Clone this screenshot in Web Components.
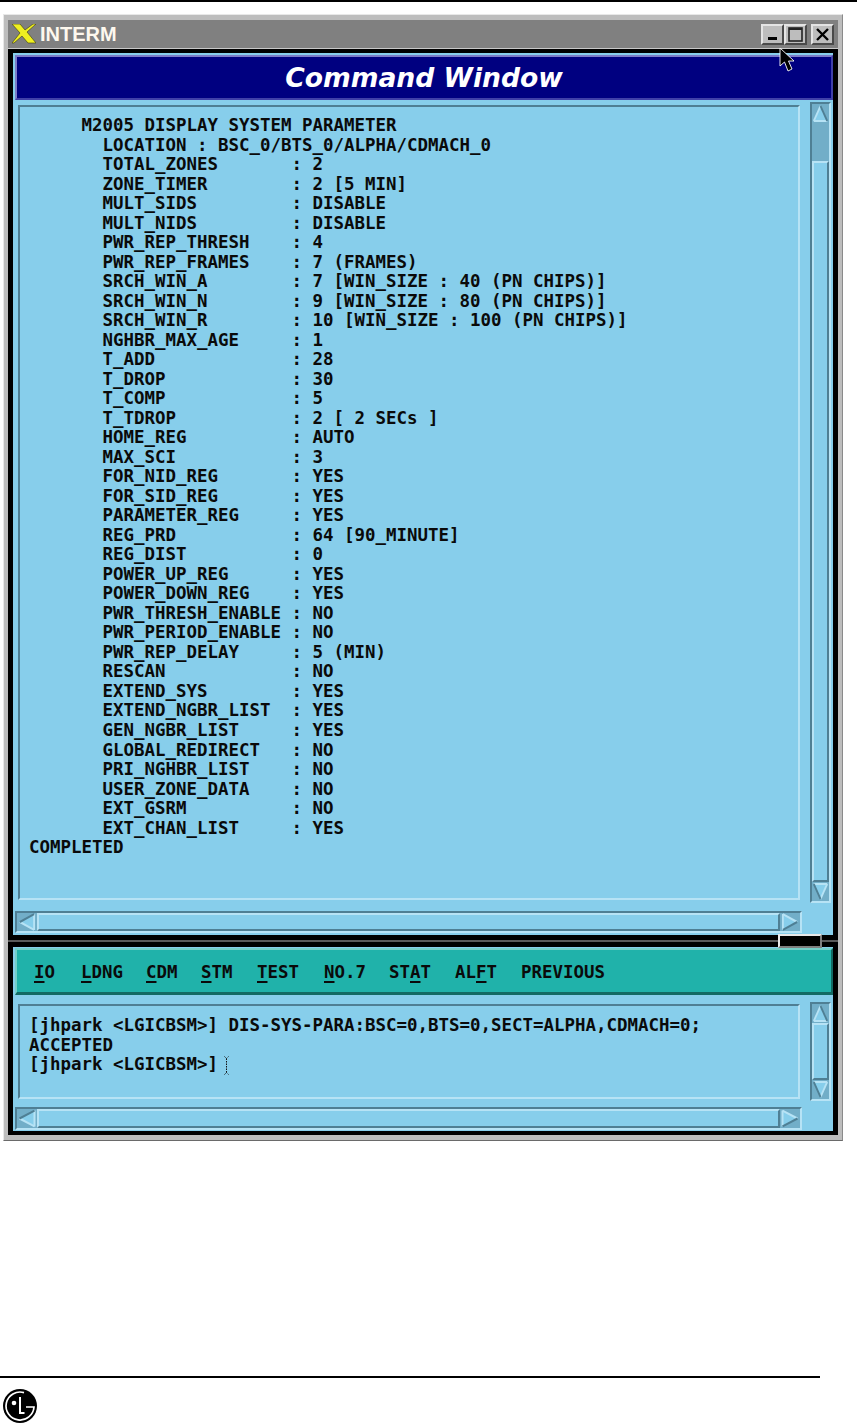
<!DOCTYPE html>
<html>
<head>
<meta charset="utf-8">
<title>Command Window</title>
<style>
  html, body { margin: 0; background: #fff; }
  body { width: 857px; height: 1425px; overflow: hidden; }
</style>
</head>
<body>
<doc-page>
  <term-window title-text="INTERM">
    <span slot="banner">Command Window</span>
    <term-pane slot="output" row-h="801" scroll-gap="8" scroll-h="22" text-inset="3" pad-top="9" thumb-top="38">     M2005 DISPLAY SYSTEM PARAMETER
       LOCATION : BSC_0/BTS_0/ALPHA/CDMACH_0
       TOTAL_ZONES       : 2
       ZONE_TIMER        : 2 [5 MIN]
       MULT_SIDS         : DISABLE
       MULT_NIDS         : DISABLE
       PWR_REP_THRESH    : 4
       PWR_REP_FRAMES    : 7 (FRAMES)
       SRCH_WIN_A        : 7 [WIN_SIZE : 40 (PN CHIPS)]
       SRCH_WIN_N        : 9 [WIN_SIZE : 80 (PN CHIPS)]
       SRCH_WIN_R        : 10 [WIN_SIZE : 100 (PN CHIPS)]
       NGHBR_MAX_AGE     : 1
       T_ADD             : 28
       T_DROP            : 30
       T_COMP            : 5
       T_TDROP           : 2 [ 2 SECs ]
       HOME_REG          : AUTO
       MAX_SCI           : 3
       FOR_NID_REG       : YES
       FOR_SID_REG       : YES
       PARAMETER_REG     : YES
       REG_PRD           : 64 [90_MINUTE]
       REG_DIST          : 0
       POWER_UP_REG      : YES
       POWER_DOWN_REG    : YES
       PWR_THRESH_ENABLE : NO
       PWR_PERIOD_ENABLE : NO
       PWR_REP_DELAY     : 5 (MIN)
       RESCAN            : NO
       EXTEND_SYS        : YES
       EXTEND_NGBR_LIST  : YES
       GEN_NGBR_LIST     : YES
       GLOBAL_REDIRECT   : NO
       PRI_NGHBR_LIST    : NO
       USER_ZONE_DATA    : NO
       EXT_GSRM          : NO
       EXT_CHAN_LIST     : YES
COMPLETED</term-pane>
    <term-pane slot="command" row-h="99" scroll-gap="6" scroll-h="23" text-inset="2" pad-top="10" thumb-top="0">[jhpark &lt;LGICBSM&gt;] DIS-SYS-PARA:BSC=0,BTS=0,SECT=ALPHA,CDMACH=0;
ACCEPTED
[jhpark &lt;LGICBSM&gt;]<i-beam></i-beam></term-pane>
  </term-window>
</doc-page>
<script>
const PANEL_FONT = `"DejaVu Sans Mono", "Liberation Mono", monospace`;

// bevel colours of the Motif look
const SKY = '#87ceeb', SKY_L = '#b7e3f5', SKY_D = '#4f7f94', SKY_T = '#72aec8';

class IBeam extends HTMLElement {
  connectedCallback() {
    // the pane is white-space: pre, and that inherits into here
    this.attachShadow({mode: 'open'}).innerHTML = `
      <style>
        :host { display: inline-block; width: 5px; height: 19px; margin-left: 6px; vertical-align: -5px; white-space: normal; }
        svg { display: block; }
      </style>
      <svg width="5" height="19" viewBox="0 0 5 19">
        <path d="M.5 .5 L2.5 2.5 L4.5 .5 M2.5 2.5 V16.5 M.5 18.5 L2.5 16.5 L4.5 18.5" fill="none" stroke="#111" stroke-dasharray="1.5 1"/>
      </svg>`;
  }
}
customElements.define('i-beam', IBeam);

class ScrollArrow extends HTMLElement {
  connectedCallback() {
    const rot = {up: 0, right: 90, down: 180, left: 270}[this.getAttribute('dir-name')];
    this.attachShadow({mode: 'open'}).innerHTML = `
      <style>
        :host { display: block; flex: none; background: ${SKY_T}; }
        svg { display: block; width: 100%; height: 100%; }
      </style>
      <svg viewBox="0 0 19 19" preserveAspectRatio="none" style="transform: rotate(${rot}deg)">
        <polygon points="9.5,2 17,17 2,17" fill="${SKY}"/>
        <path d="M2 17 H17" stroke="${SKY_L}" stroke-width="2" fill="none"/>
        <path d="M9.5 2 L2 17" stroke="${SKY_L}" stroke-width="2" fill="none"/>
        <path d="M9.5 2 L17 17" stroke="${SKY_D}" stroke-width="2" fill="none"/>
      </svg>`;
  }
}
customElements.define('scroll-arrow', ScrollArrow);

class VScroll extends HTMLElement {
  connectedCallback() {
    const top = this.getAttribute('thumb-top') || 0;
    this.attachShadow({mode: 'open'}).innerHTML = `
      <style>
        :host {
          display: flex; flex-direction: column; width: 21px; box-sizing: border-box;
          background: ${SKY_T};
          border: 2px solid; border-color: ${SKY_D} ${SKY_L} ${SKY_L} ${SKY_D};
        }
        scroll-arrow { height: 19px; }
        .track { flex: 1; display: flex; flex-direction: column; padding-top: ${top}px; }
        .thumb {
          flex: 1; box-sizing: border-box; background: ${SKY};
          border: 2px solid; border-color: ${SKY_L} ${SKY_D} ${SKY_D} ${SKY_L};
        }
      </style>
      <scroll-arrow dir-name="up"></scroll-arrow>
      <div class="track"><div class="thumb"></div></div>
      <scroll-arrow dir-name="down"></scroll-arrow>`;
  }
}
customElements.define('v-scroll', VScroll);

class HScroll extends HTMLElement {
  connectedCallback() {
    this.attachShadow({mode: 'open'}).innerHTML = `
      <style>
        :host {
          display: flex; box-sizing: border-box; background: ${SKY_T};
          border: 2px solid; border-color: ${SKY_D} ${SKY_L} ${SKY_L} ${SKY_D};
        }
        .thumb {
          flex: 1; box-sizing: border-box; background: ${SKY};
          border: 2px solid; border-color: ${SKY_L} ${SKY_D} ${SKY_D} ${SKY_L};
        }
        scroll-arrow { width: 20px; }
      </style>
      <scroll-arrow dir-name="left"></scroll-arrow>
      <div class="thumb"></div>
      <scroll-arrow dir-name="right"></scroll-arrow>`;
  }
}
customElements.define('h-scroll', HScroll);

class TermPane extends HTMLElement {
  connectedCallback() {
    const inset = this.getAttribute('text-inset');
    this.attachShadow({mode: 'open'}).innerHTML = `
      <style>
        :host { display: block; }
        .row { display: grid; grid-template-columns: 782px 21px; column-gap: 10px; height: ${this.getAttribute('row-h')}px; }
        .text {
          box-sizing: border-box; margin: ${inset}px 0; padding: ${this.getAttribute('pad-top')}px 0 0 9px; overflow: hidden;
          border: 2px solid; border-color: ${SKY_D} ${SKY_L} ${SKY_L} ${SKY_D};
          font: bold 17.44px/19.52px ${PANEL_FONT}; color: #0a0a0a; white-space: pre;
        }
        h-scroll { width: 787px; height: ${this.getAttribute('scroll-h')}px; margin: ${this.getAttribute('scroll-gap')}px 0 0 -3px; }
      </style>
      <div class="row">
        <div class="text"><slot></slot></div>
        <v-scroll thumb-top="${this.getAttribute('thumb-top')}"></v-scroll>
      </div>
      <h-scroll></h-scroll>`;
  }
}
customElements.define('term-pane', TermPane);

class MenuBar extends HTMLElement {
  connectedCallback() {
    this.attachShadow({mode: 'open'}).innerHTML = `
      <style>
        :host {
          display: grid; grid-template-columns: 47px 65px 55px 56px 67px 65px 66px 66px auto;
          align-items: center; height: 47px; box-sizing: border-box; margin-left: 2px;
          padding: 1px 0 0 17px; background: #20b2aa;
          border: 2px solid; border-bottom-width: 3px;
          border-color: #74cfc8 #136a64 #136a64 #74cfc8;
          font: bold 17.44px ${PANEL_FONT}; color: #0a0a0a;
        }
        u { text-underline-offset: 3px; text-decoration-thickness: 2px; }
      </style>
      <span><u>I</u>O</span>
      <span><u>L</u>DNG</span>
      <span><u>C</u>DM</span>
      <span><u>S</u>TM</span>
      <span><u>T</u>EST</span>
      <span><u>N</u>O.7</span>
      <span>ST<u>A</u>T</span>
      <span>AL<u>F</u>T</span>
      <span>PREVIOUS</span>`;
  }
}
customElements.define('menu-bar', MenuBar);

class TermWindow extends HTMLElement {
  connectedCallback() {
    this.attachShadow({mode: 'open'}).innerHTML = `
      <style>
        :host {
          display: block; width: 840px; height: 1127px; box-sizing: border-box; margin: 12px 0 0 3px;
          padding: 5px 4px 5px 4px; background: #bdbdbd;
          border: 1px solid; border-color: #e8e8e8 #8a8a8a #6a6a6a #e8e8e8;
        }
        .bar {
          height: 29px; box-sizing: border-box; background: #808080; display: flex; align-items: center;
          padding-left: 4px; border-bottom: 1px solid #c8c8c8;
        }
        .name { font: bold 20px "Liberation Sans", Arial, sans-serif; color: #fdf8ee; margin-left: 4px; }
        .btns { margin-left: auto; margin-right: 4px; display: flex; }
        .btn {
          width: 23px; height: 21px; box-sizing: border-box; background: #bdbdbd;
          border: 2px solid; border-color: #e4e4e4 #4a4a4a #4a4a4a #e4e4e4;
        }
        .btn.close { margin-left: 4px; }
        .btn svg { display: block; width: 100%; height: 100%; }
        .inner { background: #000; padding: 4px 5px; height: 1086px; box-sizing: border-box; }
        .top { background: ${SKY}; height: 882px; box-sizing: border-box; padding-top: 2px; }
        .banner {
          height: 45px; margin-left: 2px; box-sizing: border-box; background: #000080;
          border: 2px solid; border-color: #7c7cc8 #4040a8 #4040a8 #7c7cc8;
          display: flex; align-items: center; justify-content: center;
          font: italic bold 26.6px "DejaVu Sans", sans-serif; color: #fff;
        }
        .out { padding: 2px 0 0 5px; }
        .sash { height: 12px; margin: 0 -5px; position: relative; display: flex; align-items: center; }
        .sash::before { content: ""; flex: 1; height: 2px; background: #5a5a5a; }
        .handle {
          position: absolute; left: 770px; top: -1px; width: 44px; height: 14px; box-sizing: border-box;
          background: #000; border: 2px solid; border-color: #e8e8e8 #808080 #808080 #e8e8e8;
        }
        .bottom { background: ${SKY}; height: 184px; box-sizing: border-box; padding-top: 1px; }
        .cmd { padding: 7px 0 0 5px; }
        .cursor { position: absolute; left: 779px; top: 47px; }
      </style>
      <div class="bar">
        <svg width="24" height="20" viewBox="0 0 24 20">
          <path d="M0 0 H8 L13 6 L21 0 H24 L15 8 L24 19 H16 L10 12 L2 19 H0 L8 9 Z" fill="#f0f020" stroke="#3a3a10" stroke-width=".6"/>
        </svg>
        <span class="name">${this.getAttribute('title-text')}</span>
        <div class="btns">
          <div class="btn"><svg viewBox="2 2 19 17"><rect x="7" y="13" width="9" height="3" fill="#000"/></svg></div>
          <div class="btn"><svg viewBox="2 2 19 17"><rect x="5" y="4" width="13" height="13" fill="none" stroke="#222" stroke-width="1.6"/><rect x="5" y="4" width="13" height="2" fill="#222"/></svg></div>
          <div class="btn close"><svg viewBox="2 2 19 17"><path d="M6 5 L17 16 M17 5 L6 16" stroke="#000" stroke-width="2.4"/></svg></div>
        </div>
      </div>
      <div class="inner">
        <div class="top">
          <div class="banner"><slot name="banner"></slot></div>
          <div class="out"><slot name="output"></slot></div>
        </div>
        <div class="sash"><div class="handle"></div></div>
        <div class="bottom">
          <menu-bar></menu-bar>
          <div class="cmd"><slot name="command"></slot></div>
        </div>
      </div>
      <svg class="cursor" width="18" height="26" viewBox="0 0 18 26">
        <path d="M1 1 V19 L5.5 15 L9 24 L13 22 L9.5 14 H15 Z" fill="#000" stroke="#fff" stroke-width=".9"/>
      </svg>`;
  }
}
customElements.define('term-window', TermWindow);

class DocPage extends HTMLElement {
  connectedCallback() {
    this.attachShadow({mode: 'open'}).innerHTML = `
      <style>
        :host { display: flex; flex-direction: column; height: 1425px; position: relative; }
        .rule { height: 2px; background: #000; flex: none; }
        footer { margin-top: auto; }
        .foot-rule { height: 2px; width: 820px; background: #000; }
        .logo { display: block; margin: 11px 0 2px 3px; }
      </style>
      <div class="rule"></div>
      <slot></slot>
      <footer>
        <div class="foot-rule"></div>
        <svg class="logo" width="34" height="34" viewBox="0 0 34 34">
          <circle cx="17" cy="17" r="17" fill="#000"/>
          <circle cx="11" cy="14" r="2.3" fill="#fff"/>
          <path d="M17 8 V24 H21.5" fill="none" stroke="#fff" stroke-width="2"/>
          <path d="M23 18 H31 A14 14 0 1 1 21 3.6" fill="none" stroke="#fff" stroke-width="1.7"/>
        </svg>
      </footer>`;
  }
}
customElements.define('doc-page', DocPage);
</script>
</body>
</html>
